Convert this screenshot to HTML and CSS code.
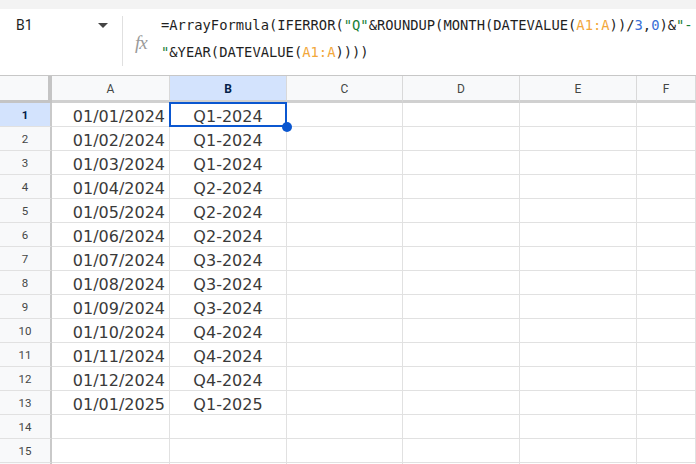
FILE: index.html
```html
<!DOCTYPE html>
<html>
<head>
<meta charset="utf-8">
<link rel="stylesheet" href="styles.css">
</head>
<body>
<div class="topband"></div>
<div class="fbar">
  <div class="namebox">
    <span class="ref">B1</span>
    <span class="caret"></span>
  </div>
  <div class="sep"></div>
  <div class="fx">fx</div>
  <div class="formula"><span class="ln">=ArrayFormula(IFERROR(<span class="s">"Q"</span>&amp;ROUNDUP(MONTH(DATEVALUE(<span class="r">A1:A</span>))/<span class="n">3</span>,<span class="n">0</span>)&amp;<span class="s">"-</span></span><span class="ln"><span class="s">"</span>&amp;YEAR(DATEVALUE(<span class="r">A1:A</span>))))</span></div>
</div>
<div class="grid">
  <div class="corner"></div>
  <div class="ch">A</div>
  <div class="ch sel">B</div>
  <div class="ch">C</div>
  <div class="ch">D</div>
  <div class="ch">E</div>
  <div class="ch">F</div>

  <div class="rh sel">1</div><div class="c a">01/01/2024</div><div class="c b active">Q1-2024</div><div class="c"></div><div class="c"></div><div class="c"></div><div class="c"></div>
  <div class="rh">2</div><div class="c a">01/02/2024</div><div class="c b">Q1-2024</div><div class="c"></div><div class="c"></div><div class="c"></div><div class="c"></div>
  <div class="rh">3</div><div class="c a">01/03/2024</div><div class="c b">Q1-2024</div><div class="c"></div><div class="c"></div><div class="c"></div><div class="c"></div>
  <div class="rh">4</div><div class="c a">01/04/2024</div><div class="c b">Q2-2024</div><div class="c"></div><div class="c"></div><div class="c"></div><div class="c"></div>
  <div class="rh">5</div><div class="c a">01/05/2024</div><div class="c b">Q2-2024</div><div class="c"></div><div class="c"></div><div class="c"></div><div class="c"></div>
  <div class="rh">6</div><div class="c a">01/06/2024</div><div class="c b">Q2-2024</div><div class="c"></div><div class="c"></div><div class="c"></div><div class="c"></div>
  <div class="rh">7</div><div class="c a">01/07/2024</div><div class="c b">Q3-2024</div><div class="c"></div><div class="c"></div><div class="c"></div><div class="c"></div>
  <div class="rh">8</div><div class="c a">01/08/2024</div><div class="c b">Q3-2024</div><div class="c"></div><div class="c"></div><div class="c"></div><div class="c"></div>
  <div class="rh">9</div><div class="c a">01/09/2024</div><div class="c b">Q3-2024</div><div class="c"></div><div class="c"></div><div class="c"></div><div class="c"></div>
  <div class="rh">10</div><div class="c a">01/10/2024</div><div class="c b">Q4-2024</div><div class="c"></div><div class="c"></div><div class="c"></div><div class="c"></div>
  <div class="rh">11</div><div class="c a">01/11/2024</div><div class="c b">Q4-2024</div><div class="c"></div><div class="c"></div><div class="c"></div><div class="c"></div>
  <div class="rh">12</div><div class="c a">01/12/2024</div><div class="c b">Q4-2024</div><div class="c"></div><div class="c"></div><div class="c"></div><div class="c"></div>
  <div class="rh">13</div><div class="c a">01/01/2025</div><div class="c b">Q1-2025</div><div class="c"></div><div class="c"></div><div class="c"></div><div class="c"></div>
  <div class="rh">14</div><div class="c a"></div><div class="c b"></div><div class="c"></div><div class="c"></div><div class="c"></div><div class="c"></div>
  <div class="rh">15</div><div class="c a"></div><div class="c b"></div><div class="c"></div><div class="c"></div><div class="c"></div><div class="c"></div>
  <div class="rh"></div><div class="c a"></div><div class="c b"></div><div class="c"></div><div class="c"></div><div class="c"></div><div class="c"></div>
</div>
</body>
</html>
```
FILE: styles.css
```css
* { box-sizing: border-box; }
html, body {
  margin: 0;
  padding: 0;
  width: 696px;
  height: 464px;
  overflow: hidden;
  background: #fff;
  font-family: Roboto, "Liberation Sans", sans-serif;
}
.topband {
  height: 9px;
  background: #f3f3f3;
}
.fbar {
  height: 67px;
  display: flex;
  align-items: flex-start;
  border-bottom: 1px solid #c7c7c7;
  overflow: hidden;
}
.namebox {
  width: 122px;
  flex: none;
  display: flex;
  align-items: center;
  height: 32px;
  padding-left: 16px;
}
.ref {
  font-size: 14px;
  color: #1f1f1f;
  flex: 1;
}
.caret {
  width: 0;
  height: 0;
  border-left: 5px solid transparent;
  border-right: 5px solid transparent;
  border-top: 5px solid #444;
  margin-right: 14px;
}
.sep {
  width: 1px;
  flex: none;
  height: 50px;
  margin-top: 7px;
  background: #e0e0e0;
}
.fx {
  width: 38px;
  flex: none;
  padding-left: 12px;
  padding-top: 23px;
  font-family: "Liberation Serif", serif;
  font-style: italic;
  font-size: 19px;
  color: #9a9a9a;
  letter-spacing: -1px;
}
.formula {
  flex: 1;
  min-width: 0;
  padding-top: 3px;
  font-family: "DejaVu Sans Mono", monospace;
  font-size: 13.8px;
  line-height: 26.5px;
  color: #1f1f1f;
  white-space: pre;
  overflow: hidden;
}
.ln { display: block; }
.s { color: #188038; }
.r { color: #f2a73b; }
.n { color: #3b6fd6; }

.grid {
  display: grid;
  grid-template-columns: 52px 118px 117px 116px 117px 117px 1fr;
  grid-template-rows: 27px repeat(16, 24px);
}
.corner {
  background: #f8f9fa;
  border-right: 4px solid #c4c4c4;
  border-bottom: 3px solid #c4c4c4;
}
.ch {
  background: #f8f9fa;
  border-right: 1px solid #d9d9d9;
  border-bottom: 3px solid #d0d0d0;
  display: flex;
  align-items: center;
  justify-content: center;
  font-size: 12px;
  color: #444746;
  padding-top: 1px;
}
.ch.sel {
  background: #d3e3fd;
  color: #041e49;
  font-weight: 700;
}
.rh {
  background: #f8f9fa;
  border-right: 2px solid #c9c9c9;
  border-bottom: 1px solid #e1e1e1;
  display: flex;
  align-items: center;
  justify-content: center;
  font-size: 11.5px;
  color: #444746;
}
.rh.sel {
  background: #d3e3fd;
  color: #041e49;
  font-weight: 700;
}
.c {
  border-right: 1px solid #e1e1e1;
  border-bottom: 1px solid #e1e1e1;
  font-family: "DejaVu Sans", sans-serif;
  font-size: 16px;
  color: #3a3a3a;
  line-height: 23px;
  padding-top: 2px;
  white-space: nowrap;
  position: relative;
}
.c.a { text-align: right; padding-right: 4px; }
.c.b { text-align: center; }
.c.active::after {
  content: "";
  position: absolute;
  left: -1px;
  top: -1px;
  right: -1px;
  bottom: -1px;
  border: 2px solid #0b57d0;
}
.c.active::before {
  content: "";
  position: absolute;
  right: -6px;
  bottom: -6px;
  width: 10px;
  height: 10px;
  border-radius: 50%;
  background: #0b57d0;
  z-index: 2;
}
```
